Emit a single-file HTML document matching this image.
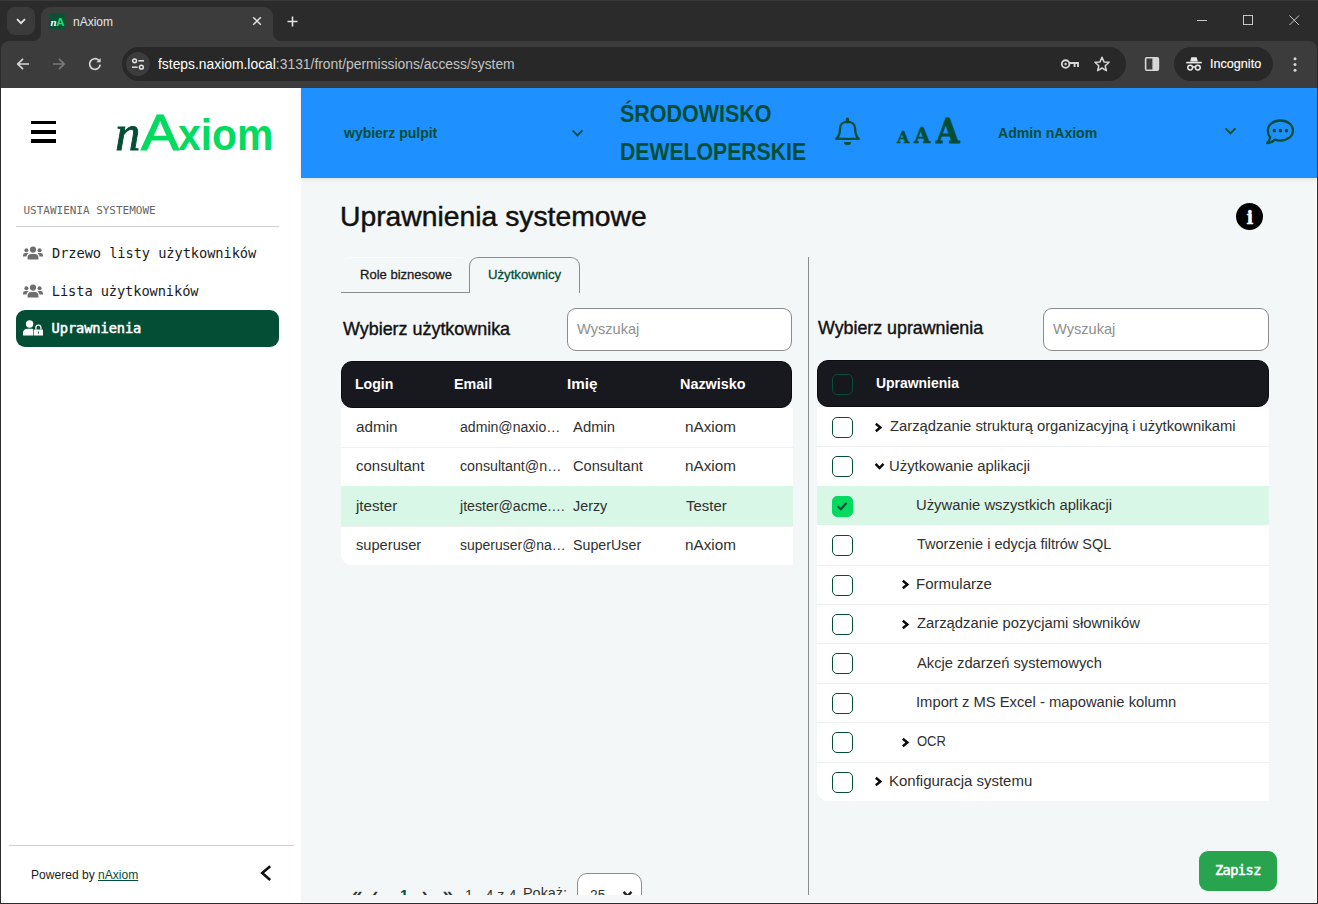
<!DOCTYPE html>
<html lang="pl"><head><meta charset="utf-8"><title>nAxiom</title>
<style>
*{box-sizing:border-box;margin:0;padding:0}
html,body{width:1318px;height:904px;overflow:hidden;background:#2b2b2b}
body{position:relative;font-family:"Liberation Sans",sans-serif}
.abs,.t,svg.i{position:absolute}
.t{white-space:nowrap;line-height:1;display:block;transform-origin:0 0}
#chrome{position:absolute;left:0;top:0;width:1318px;height:88px;background:#2b2b2b}
#page{position:absolute;left:1px;top:88px;width:1316px;height:815px;background:#f4f7f7;overflow:hidden}
#side{position:absolute;left:0;top:0;width:300px;height:815px;background:#fff}
#top{position:absolute;left:300px;top:0;width:1016px;height:89.5px;background:#1e90ff;box-shadow:0 1px 4px rgba(0,0,0,.10);z-index:2}
#main{position:absolute;left:300px;top:90px;width:1016px;height:716.5px;overflow:hidden}
</style></head><body>
<div id="chrome">
<div class="abs" style="left:0;top:0;width:1318px;height:1px;background:#3a3a3a"></div>
<div class="abs" style="left:7px;top:7px;width:28px;height:28px;border-radius:8px;background:#3b3b3b"></div>
<svg class="i" style="left:15px;top:15px" width="12" height="12" viewBox="0 0 12 12"><path d="M2 4.2 L6 8.2 L10 4.2" fill="none" stroke="#e3e3e3" stroke-width="1.8"/></svg>
<div class="abs" style="left:41px;top:7px;width:232px;height:34px;border-radius:9px 9px 0 0;background:#3c3c3c"></div>
<svg class="i" style="left:33px;top:33px" width="8" height="8" viewBox="0 0 8 8"><path d="M8 0 V8 H0 A8 8 0 0 0 8 0Z" fill="#3c3c3c"/></svg>
<svg class="i" style="left:273px;top:33px" width="8" height="8" viewBox="0 0 8 8"><path d="M0 0 V8 H8 A8 8 0 0 1 0 0Z" fill="#3c3c3c"/></svg>
<div class="abs" style="left:49px;top:13px;width:16px;height:16px;border-radius:2px;background:#0a5233"></div>
<span class="t" style="left:50.50px;top:16.00px;font:700 11px 'Liberation Serif', serif;color:#fff;font-style:italic;">n</span>
<span class="t" style="left:56.30px;top:16.00px;font:700 11.5px 'Liberation Sans', sans-serif;color:#19e070;">A</span>
<span class="t" style="left:73.00px;top:15.00px;font:400 12px 'Liberation Sans', sans-serif;color:#e6e6e6;">nAxiom</span>
<svg class="i" style="left:251px;top:15px" width="12" height="12" viewBox="0 0 12 12"><path d="M2.2 2.2 L9.8 9.8 M9.8 2.2 L2.2 9.8" fill="none" stroke="#e3e3e3" stroke-width="1.5"/></svg>
<svg class="i" style="left:286px;top:14.5px" width="13" height="13" viewBox="0 0 13 13"><path d="M6.5 1.5 V11.5 M1.5 6.5 H11.5" fill="none" stroke="#e3e3e3" stroke-width="1.6"/></svg>
<svg class="i" style="left:1196px;top:14px" width="110" height="14" viewBox="0 0 110 14"><g fill="none" stroke="#c8c8c8" stroke-width="1"><path d="M1 6.5 H11"/><rect x="47.5" y="1.5" width="9" height="9"/><path d="M93.5 1.5 L103 11 M103 1.5 L93.5 11"/></g></svg>
<div class="abs" style="left:1px;top:41px;width:1316px;height:47px;background:#3c3c3c;border-radius:8px 8px 0 0"></div>
<svg class="i" style="left:15px;top:56px" width="16" height="16" viewBox="0 0 16 16"><path d="M14 8 H3 M8 2.8 L2.8 8 L8 13.2" fill="none" stroke="#d6d6d6" stroke-width="1.7"/></svg>
<svg class="i" style="left:51px;top:56px" width="16" height="16" viewBox="0 0 16 16"><path d="M2 8 H13 M8 2.8 L13.2 8 L8 13.2" fill="none" stroke="#7a7a7a" stroke-width="1.7"/></svg>
<svg class="i" style="left:87px;top:56px" width="16" height="16" viewBox="0 0 16 16"><path d="M13.2 8.6 A5.3 5.3 0 1 1 11.6 4.2" fill="none" stroke="#d6d6d6" stroke-width="1.7"/><path d="M13.6 2 V6.2 H9.4Z" fill="#d6d6d6"/></svg>
<div class="abs" style="left:122px;top:47px;width:1004px;height:34px;border-radius:17px;background:#282828"></div>
<div class="abs" style="left:126px;top:52px;width:24px;height:24px;border-radius:12px;background:#3c3c3c"></div>
<svg class="i" style="left:130px;top:56px" width="16" height="16" viewBox="0 0 16 16"><g fill="none" stroke="#e3e3e3" stroke-width="1.5"><circle cx="4.6" cy="4.8" r="1.9"/><path d="M8.4 4.8 H14"/><circle cx="11.4" cy="11.2" r="1.9"/><path d="M2 11.2 H7.6"/></g></svg>
<span class="t" style="left:158.00px;top:56.00px;font:400 14px 'Liberation Sans', sans-serif;color:#fff;transform:scaleX(0.9900);"><span style="color:#fff">fsteps.naxiom.local</span><span style="color:#c4c4c4">:3131/front/permissions/access/system</span></span>
<svg class="i" style="left:1060px;top:57px" width="20" height="14" viewBox="0 0 20 14"><g fill="none" stroke="#d6d6d6" stroke-width="1.9"><circle cx="5.6" cy="7" r="3.8"/><path d="M9.5 6 H18 V10 M14.6 6 V10"/></g><circle cx="5.6" cy="7" r="1.2" fill="#d6d6d6"/></svg>
<svg class="i" style="left:1093px;top:55px" width="18" height="18" viewBox="0 0 18 18"><path d="M9 2.2 L11 6.9 L16.1 7.3 L12.2 10.7 L13.4 15.7 L9 13 L4.6 15.7 L5.8 10.7 L1.9 7.3 L7 6.9Z" fill="none" stroke="#d6d6d6" stroke-width="1.5" stroke-linejoin="round"/></svg>
<svg class="i" style="left:1144px;top:56px" width="16" height="16" viewBox="0 0 16 16"><rect x="1.6" y="1.8" width="12.8" height="12.4" rx="1.2" fill="none" stroke="#d6d6d6" stroke-width="1.6"/><rect x="8.4" y="2" width="6" height="12" fill="#d6d6d6"/></svg>
<div class="abs" style="left:1174px;top:47px;width:99px;height:34px;border-radius:17px;background:#282828"></div>
<svg class="i" style="left:1185px;top:55px" width="18" height="18" viewBox="0 0 18 18"><path d="M5.2 6.4 L6.3 2.2 H11.7 L12.8 6.4Z" fill="#e8e8e8"/><path d="M1.2 7.6 H16.8" stroke="#e8e8e8" stroke-width="1.6"/><g fill="none" stroke="#e8e8e8" stroke-width="1.5"><circle cx="5.2" cy="12.6" r="2.4"/><circle cx="12.8" cy="12.6" r="2.4"/><path d="M7.6 12.2 Q9 11.2 10.4 12.2"/></g></svg>
<span class="t" style="left:1209.53px;top:56.00px;font:400 13px 'Liberation Sans', sans-serif;color:#fff;transform:scaleX(0.9703);-webkit-text-stroke:0.12px #fff;">Incognito</span>
<svg class="i" style="left:1292px;top:56px" width="6" height="17" viewBox="0 0 6 17"><g fill="#d6d6d6"><circle cx="3" cy="2.8" r="1.5"/><circle cx="3" cy="8.5" r="1.5"/><circle cx="3" cy="14.2" r="1.5"/></g></svg>
</div>
<div id="page">
<div id="side">
<div class="abs" style="left:30px;top:33px;width:25px;height:22px"><div class="abs" style="left:0;top:0;width:25px;height:3.4px;background:#000"></div><div class="abs" style="left:0;top:9.2px;width:25px;height:3.4px;background:#000"></div><div class="abs" style="left:0;top:18.4px;width:25px;height:3.4px;background:#000"></div></div>
<span class="t" style="left:114.30px;top:16.00px;font:400 50px 'Liberation Serif', serif;color:#044e36;font-style:italic;-webkit-text-stroke:0.9px #044e36;">n</span>
<span class="t" style="left:139.60px;top:15.00px;font:400 50.5px 'Liberation Sans', sans-serif;color:#02db60;-webkit-text-stroke:1.1px #02db60;transform:scaleX(1.13);transform-origin:0 0;">A</span>
<span class="t" style="left:177.20px;top:22.00px;font:700 44.5px 'Liberation Sans', sans-serif;color:#02db60;transform:scaleX(0.9181);">xiom</span>
<span class="t" style="left:22.50px;top:116.00px;font:400 11px 'DejaVu Sans Mono', 'Liberation Mono', monospace;color:#666;letter-spacing:-0.017px;">USTAWIENIA SYSTEMOWE</span>
<div class="abs" style="left:15px;top:137.5px;width:263px;height:1px;background:#cfcfcf"></div>
<svg class="i" style="left:22px;top:158px" width="20" height="14" viewBox="0 0 20 14"><g fill="#6e6e6e"><circle cx="10" cy="3.6" r="3.1"/><path d="M4.6 13.6 V11.6 Q4.6 7.9 8.2 7.9 H11.8 Q15.4 7.9 15.4 11.6 V13.6Z"/><circle cx="3.4" cy="4.2" r="2"/><path d="M0 10.6 V9.4 Q0 7 2.4 7 H4.4 Q5.2 7 5.6 7.3 Q3.6 8.6 3.5 10.6Z"/><circle cx="16.6" cy="4.2" r="2"/><path d="M20 10.6 V9.4 Q20 7 17.6 7 H15.6 Q14.8 7 14.4 7.3 Q16.4 8.6 16.5 10.6Z"/></g></svg>
<span class="t" style="left:51.00px;top:157.00px;font:400 13.7px 'DejaVu Sans Mono', 'Liberation Mono', monospace;color:#1c1c1c;letter-spacing:-0.074px;">Drzewo listy użytkowników</span>
<svg class="i" style="left:22px;top:196px" width="20" height="14" viewBox="0 0 20 14"><g fill="#6e6e6e"><circle cx="10" cy="3.6" r="3.1"/><path d="M4.6 13.6 V11.6 Q4.6 7.9 8.2 7.9 H11.8 Q15.4 7.9 15.4 11.6 V13.6Z"/><circle cx="3.4" cy="4.2" r="2"/><path d="M0 10.6 V9.4 Q0 7 2.4 7 H4.4 Q5.2 7 5.6 7.3 Q3.6 8.6 3.5 10.6Z"/><circle cx="16.6" cy="4.2" r="2"/><path d="M20 10.6 V9.4 Q20 7 17.6 7 H15.6 Q14.8 7 14.4 7.3 Q16.4 8.6 16.5 10.6Z"/></g></svg>
<span class="t" style="left:50.80px;top:195.00px;font:400 13.7px 'DejaVu Sans Mono', 'Liberation Mono', monospace;color:#1c1c1c;letter-spacing:-0.094px;">Lista użytkowników</span>
<div class="abs" style="left:15px;top:222px;width:263px;height:37px;border-radius:9px;background:#044e36"></div>
<svg class="i" style="left:22px;top:231.5px" width="20" height="16" viewBox="0 0 20 16"><g fill="#fff"><circle cx="6.6" cy="4" r="3.7"/><path d="M0 15.6 V13.4 Q0 8.8 4.4 8.8 H8.6 Q9.6 8.8 10.2 9.1 V15.6Z"/><path d="M11.4 9.4 H19.4 Q20 9.4 20 10 V15 Q20 15.6 19.4 15.6 H11.4 Q10.8 15.6 10.8 15 V10 Q10.8 9.4 11.4 9.4Z M14.9 11.6 V13.6 H15.9 V11.6Z" fill-rule="evenodd"/><path d="M12.9 9.6 V7.6 A2.5 2.5 0 0 1 17.9 7.6 V9.6" fill="none" stroke="#fff" stroke-width="1.3"/></g></svg>
<span class="t" style="left:50.60px;top:232.00px;font:400 13.7px 'DejaVu Sans Mono', 'Liberation Mono', monospace;color:#fff;letter-spacing:-0.091px;-webkit-text-stroke:0.5px #fff;">Uprawnienia</span>
<div class="abs" style="left:8px;top:757px;width:285px;height:1px;background:#cfcfcf"></div>
<span class="t" style="left:29.82px;top:780.00px;font:400 12.3px 'Liberation Sans', sans-serif;color:#1c1c1c;transform:scaleX(0.9805);">Powered by <span style="color:#044e36;text-decoration:underline">nAxiom</span></span>
<svg class="i" style="left:257px;top:776px" width="16" height="18" viewBox="0 0 16 18"><path d="M12.2 2.2 L4.2 9.1 L12.2 16" fill="none" stroke="#111" stroke-width="2.6"/></svg>
</div>
<div id="top">
<span class="t" style="left:42.90px;top:36.00px;font:700 15.5px 'Liberation Sans', sans-serif;color:#044e36;transform:scaleX(0.9023);">wybierz pulpit</span>
<svg class="i" style="left:270px;top:40px" width="13" height="10" viewBox="0 0 13 10"><path d="M1.6 2.4 L6.5 7.4 L11.4 2.4" fill="none" stroke="#044e36" stroke-width="1.9"/></svg>
<span class="t" style="left:319.30px;top:12.00px;font:700 24.3px 'Liberation Sans', sans-serif;color:#044e36;transform:scaleX(0.8837);">ŚRODOWISKO</span>
<span class="t" style="left:318.93px;top:50.00px;font:700 24.3px 'Liberation Sans', sans-serif;color:#044e36;transform:scaleX(0.8723);">DEWELOPERSKIE</span>
<svg class="i" style="left:533px;top:28px" width="28" height="31" viewBox="834 116 28 31"><path d="M836.3 138.9 H858.7 C856 136.5 855.1 133 855.1 128.5 C855.1 124.5 852 121.9 847.5 121.9 C843 121.9 840 124.5 840 128.5 C840 133 839 136.5 836.3 138.9Z" fill="none" stroke="#044e36" stroke-width="2.3" stroke-linejoin="round"/><path d="M847.5 119.2 V122" stroke="#044e36" stroke-width="3.2" stroke-linecap="round"/><path d="M844 142.1 H851 A3.5 3.2 0 0 1 844 142.1Z" fill="#044e36"/></svg>
<span class="t" style="left:596.30px;top:39.00px;font:700 17.1px 'DejaVu Serif', 'Liberation Serif', serif;color:#044e36;-webkit-text-stroke:0.5px #044e36;transform:scaleX(0.93);">A</span>
<span class="t" style="left:613.30px;top:34.00px;font:700 22.6px 'DejaVu Serif', 'Liberation Serif', serif;color:#044e36;-webkit-text-stroke:0.6px #044e36;transform:scaleX(0.93);">A</span>
<span class="t" style="left:634.90px;top:24.00px;font:700 32.6px 'DejaVu Serif', 'Liberation Serif', serif;color:#044e36;-webkit-text-stroke:0.8px #044e36;transform:scaleX(0.93);">A</span>
<span class="t" style="left:696.50px;top:36.00px;font:700 15.5px 'Liberation Sans', sans-serif;color:#044e36;transform:scaleX(0.9072);">Admin nAxiom</span>
<svg class="i" style="left:922.5px;top:38px" width="13" height="10" viewBox="0 0 13 10"><path d="M1.6 2.4 L6.5 7.4 L11.4 2.4" fill="none" stroke="#044e36" stroke-width="1.9"/></svg>
<svg class="i" style="left:964px;top:30px" width="30" height="28.2" viewBox="0 0 30 27" preserveAspectRatio="none"><path d="M15.4 2.4 C22.6 2.4 28 6.6 28 12 C28 17.4 22.6 21.6 15.4 21.6 C13.4 21.6 11.6 21.3 10 20.7 C8 22.6 5.2 23.8 2.2 24 C3.8 22.4 4.8 20.4 5.2 18.4 C3.6 16.6 2.8 14.4 2.8 12 C2.8 6.6 8.2 2.4 15.4 2.4Z" fill="none" stroke="#044e36" stroke-width="2.2" stroke-linejoin="round"/><g fill="#044e36"><circle cx="9.3" cy="12.1" r="1.7"/><circle cx="15.4" cy="12.1" r="1.7"/><circle cx="21.5" cy="12.1" r="1.7"/></g></svg>
</div>
<div id="main">
<span class="t" style="left:39.10px;top:24.00px;font:400 27px 'Liberation Sans', sans-serif;color:#111;transform:scaleX(1.0480);-webkit-text-stroke:0.45px #111;">Uprawnienia systemowe</span>
<div class="abs" style="left:935.00px;top:25.00px;width:27.00px;height:27.00px;border-radius:50%;background:#000"></div>
<span class="t" style="left:945.40px;top:29.00px;font:700 18px 'DejaVu Serif', 'Liberation Serif', serif;color:#fff;-webkit-text-stroke:0.4px #fff;">i</span>
<div class="abs" style="left:40.00px;top:79.00px;width:128.50px;height:36.00px;border-top:1px solid #fbfcfc;border-bottom:1px solid #8c8c8c;border-radius:9px 9px 0 0"></div>
<div class="abs" style="left:168.00px;top:79.00px;width:111.00px;height:36.00px;border:1px solid #8c8c8c;border-bottom:none;border-radius:9px 9px 0 0"></div>
<span class="t" style="left:58.83px;top:89.00px;font:400 13.4px 'Liberation Sans', sans-serif;color:#1a1a1a;transform:scaleX(0.9722);-webkit-text-stroke:0.3px #1a1a1a;">Role biznesowe</span>
<span class="t" style="left:186.82px;top:89.00px;font:400 13.4px 'Liberation Sans', sans-serif;color:#044e36;transform:scaleX(0.9836);-webkit-text-stroke:0.3px #044e36;">Użytkownicy</span>
<div class="abs" style="left:507.00px;top:79.00px;width:1.00px;height:643.00px;background:#8c8c8c"></div>
<span class="t" style="left:42.00px;top:141.00px;font:400 18.1px 'Liberation Sans', sans-serif;color:#111;transform:scaleX(0.9900);-webkit-text-stroke:0.4px #111;">Wybierz użytkownika</span>
<div class="abs" style="left:266.00px;top:130.00px;width:225.00px;height:43.00px;border:1px solid #8c8c8c;border-radius:9px;background:#fff"></div>
<span class="t" style="left:276.00px;top:142.00px;font:400 15px 'Liberation Sans', sans-serif;color:#8f8f8f;transform:scaleX(0.9732);">Wyszukaj</span>
<div class="abs" style="left:40.00px;top:183.00px;width:451.00px;height:46.50px;background:#18181f;border:1px solid #0b0b14;border-radius:11px"></div>
<span class="t" style="left:54.46px;top:197.00px;font:700 15px 'Liberation Sans', sans-serif;color:#fff;transform:scaleX(0.9406);">Login</span>
<span class="t" style="left:153.25px;top:197.00px;font:700 15px 'Liberation Sans', sans-serif;color:#fff;transform:scaleX(0.9523);">Email</span>
<span class="t" style="left:265.98px;top:197.00px;font:700 15px 'Liberation Sans', sans-serif;color:#fff;transform:scaleX(1.0184);">Imię</span>
<span class="t" style="left:379.04px;top:197.00px;font:700 15px 'Liberation Sans', sans-serif;color:#fff;transform:scaleX(0.9599);">Nazwisko</span>
<div class="abs" style="left:40.00px;top:229.50px;width:452.00px;height:157.60px;background:#fff;border-radius:0 0 0 11px"></div>
<span class="t" style="left:55.00px;top:240.00px;font:400 15.5px 'Liberation Sans', sans-serif;color:#303030;transform:scaleX(0.9857);">admin</span>
<span class="t" style="left:159.00px;top:240.00px;font:400 15.5px 'Liberation Sans', sans-serif;color:#303030;transform:scaleX(0.9082);">admin@naxio…</span>
<span class="t" style="left:272.00px;top:240.00px;font:400 15.5px 'Liberation Sans', sans-serif;color:#303030;transform:scaleX(0.9581);">Admin</span>
<span class="t" style="left:384.02px;top:240.00px;font:400 15.5px 'Liberation Sans', sans-serif;color:#303030;transform:scaleX(0.9845);">nAxiom</span>
<div class="abs" style="left:40.00px;top:268.90px;width:452.00px;height:1.00px;background:#eff1f1"></div>
<span class="t" style="left:55.00px;top:279.00px;font:400 15.5px 'Liberation Sans', sans-serif;color:#303030;transform:scaleX(0.9670);">consultant</span>
<span class="t" style="left:159.00px;top:279.00px;font:400 15.5px 'Liberation Sans', sans-serif;color:#303030;transform:scaleX(0.9173);">consultant@n…</span>
<span class="t" style="left:272.00px;top:279.00px;font:400 15.5px 'Liberation Sans', sans-serif;color:#303030;transform:scaleX(0.9426);">Consultant</span>
<span class="t" style="left:384.02px;top:279.00px;font:400 15.5px 'Liberation Sans', sans-serif;color:#303030;transform:scaleX(0.9845);">nAxiom</span>
<div class="abs" style="left:40.00px;top:308.30px;width:452.00px;height:39.40px;background:#d9f7e6"></div>
<span class="t" style="left:54.98px;top:319.00px;font:400 15.5px 'Liberation Sans', sans-serif;color:#303030;transform:scaleX(0.9757);">jtester</span>
<span class="t" style="left:158.91px;top:319.00px;font:400 15.5px 'Liberation Sans', sans-serif;color:#303030;transform:scaleX(0.9118);">jtester@acme.…</span>
<span class="t" style="left:272.00px;top:319.00px;font:400 15.5px 'Liberation Sans', sans-serif;color:#303030;transform:scaleX(0.9254);">Jerzy</span>
<span class="t" style="left:385.00px;top:319.00px;font:400 15.5px 'Liberation Sans', sans-serif;color:#303030;transform:scaleX(0.9632);">Tester</span>
<div class="abs" style="left:40.00px;top:347.70px;width:452.00px;height:1.00px;background:#eff1f1"></div>
<span class="t" style="left:55.00px;top:358.00px;font:400 15.5px 'Liberation Sans', sans-serif;color:#303030;transform:scaleX(0.9453);">superuser</span>
<span class="t" style="left:159.00px;top:358.00px;font:400 15.5px 'Liberation Sans', sans-serif;color:#303030;transform:scaleX(0.9016);">superuser@na…</span>
<span class="t" style="left:272.00px;top:358.00px;font:400 15.5px 'Liberation Sans', sans-serif;color:#303030;transform:scaleX(0.9199);">SuperUser</span>
<span class="t" style="left:384.02px;top:358.00px;font:400 15.5px 'Liberation Sans', sans-serif;color:#303030;transform:scaleX(0.9845);">nAxiom</span>
<span class="t" style="left:51.00px;top:705.00px;font:700 19px 'Liberation Sans', sans-serif;color:#333;">«</span>
<span class="t" style="left:71.00px;top:705.00px;font:700 19px 'Liberation Sans', sans-serif;color:#333;">‹</span>
<span class="t" style="left:99.00px;top:708.00px;font:700 15px 'Liberation Sans', sans-serif;color:#044e36;">1</span>
<span class="t" style="left:120.50px;top:705.00px;font:700 19px 'Liberation Sans', sans-serif;color:#333;">›</span>
<span class="t" style="left:141.50px;top:705.00px;font:700 19px 'Liberation Sans', sans-serif;color:#333;">»</span>
<span class="t" style="left:164.05px;top:708.00px;font:400 15px 'Liberation Sans', sans-serif;color:#333;transform:scaleX(0.9461);">1 - 4 z 4</span>
<span class="t" style="left:222.04px;top:706.00px;font:400 15px 'Liberation Sans', sans-serif;color:#333;transform:scaleX(0.9613);">Pokaż:</span>
<div class="abs" style="left:276.00px;top:695.00px;width:64.50px;height:43.00px;border:1px solid #8c8c8c;border-radius:10px;background:#fff"></div>
<span class="t" style="left:289.00px;top:708.00px;font:400 15px 'Liberation Sans', sans-serif;color:#333;transform:scaleX(0.9179);">25</span>
<svg class="i" style="left:320.90px;top:712.20px" width="12" height="8" viewBox="0 0 12 8"><path d="M1.6 1.85 L5.55 6.1 L9.5 1.85" fill="none" stroke="#222" stroke-width="2.4"/></svg>
<span class="t" style="left:517.00px;top:140.00px;font:400 18.1px 'Liberation Sans', sans-serif;color:#111;transform:scaleX(0.9839);-webkit-text-stroke:0.4px #111;">Wybierz uprawnienia</span>
<div class="abs" style="left:742.00px;top:130.00px;width:225.50px;height:43.00px;border:1px solid #8c8c8c;border-radius:9px;background:#fff"></div>
<span class="t" style="left:752.00px;top:142.00px;font:400 15px 'Liberation Sans', sans-serif;color:#8f8f8f;transform:scaleX(0.9732);">Wyszukaj</span>
<div class="abs" style="left:516.00px;top:182.00px;width:452.00px;height:47.00px;background:#18181f;border:1px solid #0b0b14;border-radius:11px"></div>
<div class="abs" style="left:531.00px;top:196.00px;width:21px;height:21px;border-radius:5px;background:#17181d;border:1.3px solid #044e36;"></div>
<span class="t" style="left:574.50px;top:196.00px;font:700 15px 'Liberation Sans', sans-serif;color:#fff;transform:scaleX(0.9294);">Uprawnienia</span>
<div class="abs" style="left:516.00px;top:229.00px;width:452.00px;height:394.00px;background:#fff;border-radius:0 0 0 11px"></div>
<div class="abs" style="left:531.00px;top:239.00px;width:21px;height:21px;border-radius:5px;background:#fff;border:1.5px solid #044e36;"></div>
<svg class="i" style="left:572.90px;top:243.70px" width="9" height="11" viewBox="0 0 9 11"><path d="M1.8 1.8 L6.4 5.5 L1.8 9.2" fill="none" stroke="#0a0a0a" stroke-width="2.4"/></svg>
<span class="t" style="left:588.80px;top:239.00px;font:400 15.5px 'Liberation Sans', sans-serif;color:#303030;transform:scaleX(0.9530);">Zarządzanie strukturą organizacyjną i użytkownikami</span>
<div class="abs" style="left:516.00px;top:268.40px;width:452.00px;height:1.00px;background:#eff1f1"></div>
<div class="abs" style="left:531.00px;top:278.40px;width:21px;height:21px;border-radius:5px;background:#fff;border:1.5px solid #044e36;"></div>
<svg class="i" style="left:572.60px;top:284.20px" width="12" height="8" viewBox="0 0 12 8"><path d="M1.6 1.85 L5.55 6.1 L9.5 1.85" fill="none" stroke="#0a0a0a" stroke-width="2.4"/></svg>
<span class="t" style="left:587.84px;top:279.00px;font:400 15.5px 'Liberation Sans', sans-serif;color:#303030;transform:scaleX(0.9577);">Użytkowanie aplikacji</span>
<div class="abs" style="left:516.00px;top:307.80px;width:452.00px;height:39.40px;background:#d9f7e6"></div>
<div class="abs" style="left:531.00px;top:317.80px;width:21px;height:21px;border-radius:5px;background:#02db60;border:1.3px solid #02db60;"><svg class="i" style="left:2.2px;top:2.2px" width="14" height="14" viewBox="0 0 14 14"><path d="M2.6 7.2 L5.8 10.2 L11.6 3.8" fill="none" stroke="#044e36" stroke-width="2.2"/></svg></div>
<span class="t" style="left:614.79px;top:318.00px;font:400 15.5px 'Liberation Sans', sans-serif;color:#303030;transform:scaleX(0.9567);">Używanie wszystkich aplikacji</span>
<div class="abs" style="left:531.00px;top:357.20px;width:21px;height:21px;border-radius:5px;background:#fff;border:1.5px solid #044e36;"></div>
<span class="t" style="left:615.75px;top:357.00px;font:400 15.5px 'Liberation Sans', sans-serif;color:#303030;transform:scaleX(0.9364);">Tworzenie i edycja filtrów SQL</span>
<div class="abs" style="left:516.00px;top:386.60px;width:452.00px;height:1.00px;background:#eff1f1"></div>
<div class="abs" style="left:531.00px;top:396.60px;width:21px;height:21px;border-radius:5px;background:#fff;border:1.5px solid #044e36;"></div>
<svg class="i" style="left:599.85px;top:401.30px" width="9" height="11" viewBox="0 0 9 11"><path d="M1.8 1.8 L6.4 5.5 L1.8 9.2" fill="none" stroke="#0a0a0a" stroke-width="2.4"/></svg>
<span class="t" style="left:614.78px;top:397.00px;font:400 15.5px 'Liberation Sans', sans-serif;color:#303030;transform:scaleX(0.9673);">Formularze</span>
<div class="abs" style="left:516.00px;top:426.00px;width:452.00px;height:1.00px;background:#eff1f1"></div>
<div class="abs" style="left:531.00px;top:436.00px;width:21px;height:21px;border-radius:5px;background:#fff;border:1.5px solid #044e36;"></div>
<svg class="i" style="left:599.85px;top:440.70px" width="9" height="11" viewBox="0 0 9 11"><path d="M1.8 1.8 L6.4 5.5 L1.8 9.2" fill="none" stroke="#0a0a0a" stroke-width="2.4"/></svg>
<span class="t" style="left:615.75px;top:436.00px;font:400 15.5px 'Liberation Sans', sans-serif;color:#303030;transform:scaleX(0.9551);">Zarządzanie pozycjami słowników</span>
<div class="abs" style="left:516.00px;top:465.40px;width:452.00px;height:1.00px;background:#eff1f1"></div>
<div class="abs" style="left:531.00px;top:475.40px;width:21px;height:21px;border-radius:5px;background:#fff;border:1.5px solid #044e36;"></div>
<span class="t" style="left:615.75px;top:476.00px;font:400 15.5px 'Liberation Sans', sans-serif;color:#303030;transform:scaleX(0.9494);">Akcje zdarzeń systemowych</span>
<div class="abs" style="left:516.00px;top:504.80px;width:452.00px;height:1.00px;background:#eff1f1"></div>
<div class="abs" style="left:531.00px;top:514.80px;width:21px;height:21px;border-radius:5px;background:#fff;border:1.5px solid #044e36;"></div>
<span class="t" style="left:614.80px;top:515.00px;font:400 15.5px 'Liberation Sans', sans-serif;color:#303030;transform:scaleX(0.9532);">Import z MS Excel - mapowanie kolumn</span>
<div class="abs" style="left:516.00px;top:544.20px;width:452.00px;height:1.00px;background:#eff1f1"></div>
<div class="abs" style="left:531.00px;top:554.20px;width:21px;height:21px;border-radius:5px;background:#fff;border:1.5px solid #044e36;"></div>
<svg class="i" style="left:599.85px;top:558.90px" width="9" height="11" viewBox="0 0 9 11"><path d="M1.8 1.8 L6.4 5.5 L1.8 9.2" fill="none" stroke="#0a0a0a" stroke-width="2.4"/></svg>
<span class="t" style="left:615.75px;top:554.00px;font:400 15.5px 'Liberation Sans', sans-serif;color:#303030;transform:scaleX(0.8394);">OCR</span>
<div class="abs" style="left:516.00px;top:583.60px;width:452.00px;height:1.00px;background:#eff1f1"></div>
<div class="abs" style="left:531.00px;top:593.60px;width:21px;height:21px;border-radius:5px;background:#fff;border:1.5px solid #044e36;"></div>
<svg class="i" style="left:572.90px;top:598.30px" width="9" height="11" viewBox="0 0 9 11"><path d="M1.8 1.8 L6.4 5.5 L1.8 9.2" fill="none" stroke="#0a0a0a" stroke-width="2.4"/></svg>
<span class="t" style="left:587.83px;top:594.00px;font:400 15.5px 'Liberation Sans', sans-serif;color:#303030;transform:scaleX(0.9668);">Konfiguracja systemu</span>
<div class="abs" style="left:898.00px;top:673.00px;width:78.00px;height:40.00px;background:#28a44f;border-radius:9px"></div>
<span class="t" style="left:913.90px;top:684.00px;font:400 13.7px 'DejaVu Sans Mono', 'Liberation Mono', monospace;color:#fff;letter-spacing:-0.581px;-webkit-text-stroke:0.5px #fff;">Zapisz</span>
</div>
<div class="abs" style="left:1315px;top:90px;width:1px;height:725px;background:#fdfefe"></div>
<div class="abs" style="left:300px;top:814px;width:1016px;height:1px;background:#fdfefe"></div>
</div>
</body></html>
